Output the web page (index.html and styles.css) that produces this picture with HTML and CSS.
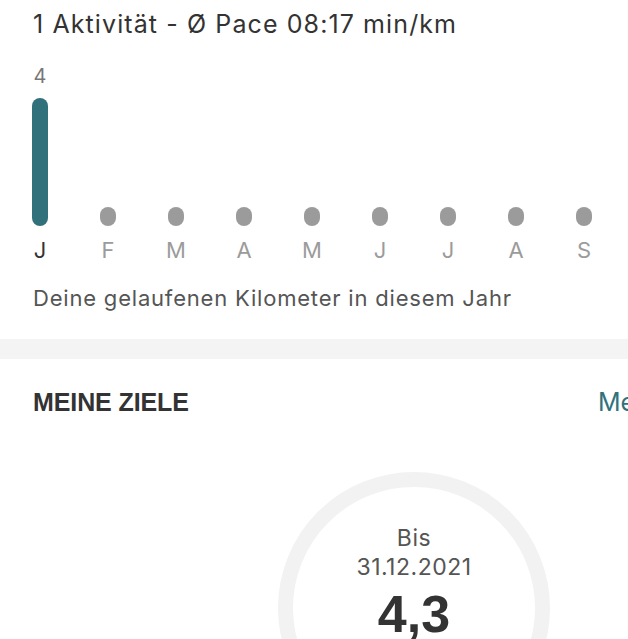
FILE: index.html
```html
<!DOCTYPE html>
<html lang="de">

<head>
    <meta charset="UTF-8">
    <meta name="viewport" content="width=device-width, initial-scale=1.0">
    <title>Statistik</title>
    <link rel="stylesheet" href="styles.css">
</head>

<body>
    <div class="page">
        <section class="stats">
            <h2 class="summary">1 Aktivität - Ø Pace 08:17 min/km</h2>

            <div class="chart">
                <div class="month">
                    <span class="value">4</span>
                    <span class="bar active" style="height: 128px"></span>
                    <span class="label current">J</span>
                </div>
                <div class="month">
                    <span class="bar"></span>
                    <span class="label">F</span>
                </div>
                <div class="month">
                    <span class="bar"></span>
                    <span class="label">M</span>
                </div>
                <div class="month">
                    <span class="bar"></span>
                    <span class="label">A</span>
                </div>
                <div class="month">
                    <span class="bar"></span>
                    <span class="label">M</span>
                </div>
                <div class="month">
                    <span class="bar"></span>
                    <span class="label">J</span>
                </div>
                <div class="month">
                    <span class="bar"></span>
                    <span class="label">J</span>
                </div>
                <div class="month">
                    <span class="bar"></span>
                    <span class="label">A</span>
                </div>
                <div class="month">
                    <span class="bar"></span>
                    <span class="label">S</span>
                </div>
            </div>

            <p class="caption">Deine gelaufenen Kilometer in diesem Jahr</p>
        </section>

        <div class="divider"></div>

        <section class="goals">
            <div class="goals-header">
                <h3>MEINE ZIELE</h3>
                <a href="#goals" class="more">Mehr</a>
            </div>

            <div class="ring">
                <span class="ring-label">Bis<br>31.12.2021</span>
                <span class="ring-value">4,3</span>
            </div>
        </section>
    </div>
</body>

</html>
```

FILE: styles.css
```css
html,
body {
    margin: 0;
    padding: 0;
    background-color: #fff;
    overflow: hidden;
}

body {
    font-family: Inter, "Open Sans", sans-serif;
    color: #333;
}

.page {
    width: 828px;
}

.stats {
    padding: 9px 33px 0;
}

.summary {
    margin: 0;
    font-size: 25px;
    font-weight: 400;
    line-height: 30px;
    letter-spacing: 1.1px;
    color: #333;
}

.chart {
    display: flex;
    align-items: flex-end;
    margin-top: 25px;
    margin-left: -1px;
}

.month {
    width: 68px;
    display: flex;
    flex-direction: column;
    align-items: flex-start;
}

.month .value,
.month .label {
    width: 16px;
    display: flex;
    justify-content: center;
    white-space: nowrap;
}

.value {
    font-size: 20px;
    line-height: 24px;
    color: #777;
    margin-bottom: 10px;
}

.bar {
    display: block;
    flex-shrink: 0;
    width: 16px;
    height: 19px;
    border-radius: 8px;
    background-color: #9b9b9b;
}

.bar.active {
    background-color: #31717b;
}

.label {
    margin-top: 11px;
    font-size: 22px;
    line-height: 26px;
    color: #9b9b9b;
}

.label.current {
    color: #333;
}

.caption {
    margin: 22px 0 0;
    font-size: 22px;
    line-height: 26px;
    letter-spacing: 0.8px;
    color: #555;
}

.divider {
    height: 20px;
    margin-top: 28px;
    background-color: #f4f4f4;
}

.goals {
    padding: 0 33px;
}

.goals-header {
    display: grid;
    grid-template-columns: 565px auto;
    padding-top: 28px;
}

.goals-header h3 {
    margin: 0;
    font-family: "Liberation Sans", Arial, sans-serif;
    font-size: 25px;
    font-weight: 700;
    line-height: 30px;
    letter-spacing: -0.1px;
    color: #333;
}

.more {
    font-size: 25px;
    line-height: 30px;
    color: #31717b;
    text-decoration: none;
}

.ring {
    box-sizing: border-box;
    width: 272px;
    height: 272px;
    margin: 55px auto 0;
    border: 15px solid #f2f2f2;
    border-radius: 50%;
    display: flex;
    flex-direction: column;
    align-items: center;
    padding-top: 37px;
}

.ring-label {
    font-size: 23px;
    line-height: 29px;
    letter-spacing: 0.5px;
    color: #555;
    text-align: center;
}

.ring-value {
    margin-top: 4px;
    font-family: "Liberation Sans", Arial, sans-serif;
    font-size: 52px;
    font-weight: 700;
    line-height: 56px;
    color: #333;
}
```
